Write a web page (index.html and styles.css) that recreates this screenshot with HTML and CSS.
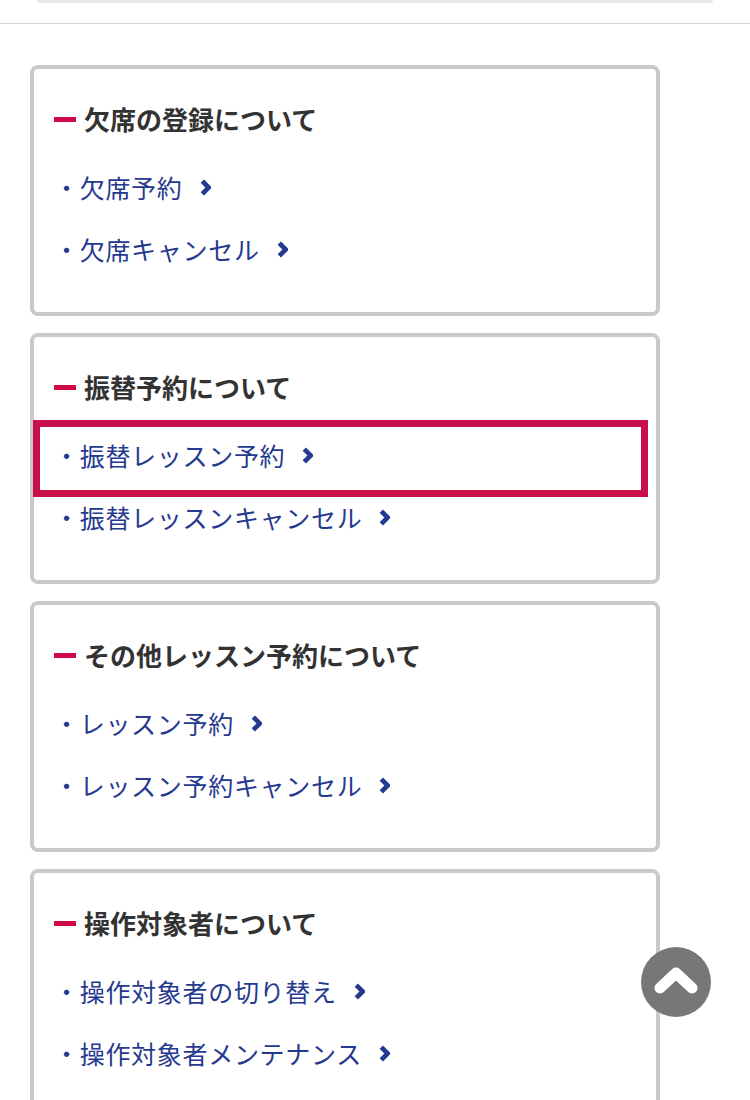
FILE: index.html
```html
<!DOCTYPE html>
<html lang="ja">
<head>
    <title>ヘルプ</title>
    <meta charset="utf-8">
    <link rel="stylesheet" href="styles.css">
</head>
<body>
    <div class="top">
        <div class="search"></div>
    </div>
    <div class="wrapper">
        <div class="card">
            <h2 class="card-title">欠席の登録について</h2>
            <ul class="links">
                <li class="link-item"><a href="#">・欠席予約<svg class="chev" viewBox="0 0 10 16"><polyline points="2,2 8,8 2,14"/></svg></a></li>
                <li class="link-item"><a href="#">・欠席キャンセル<svg class="chev" viewBox="0 0 10 16"><polyline points="2,2 8,8 2,14"/></svg></a></li>
            </ul>
        </div>
        <div class="card">
            <h2 class="card-title">振替予約について</h2>
            <ul class="links">
                <li class="link-item marked"><a href="#">・振替レッスン予約<svg class="chev" viewBox="0 0 10 16"><polyline points="2,2 8,8 2,14"/></svg></a></li>
                <li class="link-item"><a href="#">・振替レッスンキャンセル<svg class="chev" viewBox="0 0 10 16"><polyline points="2,2 8,8 2,14"/></svg></a></li>
            </ul>
        </div>
        <div class="card">
            <h2 class="card-title">その他レッスン予約について</h2>
            <ul class="links">
                <li class="link-item"><a href="#">・レッスン予約<svg class="chev" viewBox="0 0 10 16"><polyline points="2,2 8,8 2,14"/></svg></a></li>
                <li class="link-item"><a href="#">・レッスン予約キャンセル<svg class="chev" viewBox="0 0 10 16"><polyline points="2,2 8,8 2,14"/></svg></a></li>
            </ul>
        </div>
        <div class="card">
            <h2 class="card-title">操作対象者について</h2>
            <ul class="links">
                <li class="link-item"><a href="#">・操作対象者の切り替え<svg class="chev" viewBox="0 0 10 16"><polyline points="2,2 8,8 2,14"/></svg></a></li>
                <li class="link-item"><a href="#">・操作対象者メンテナンス<svg class="chev" viewBox="0 0 10 16"><polyline points="2,2 8,8 2,14"/></svg></a></li>
            </ul>
        </div>
    </div>
    <a href="#" class="to-top">
        <svg viewBox="0 0 46 30"><polyline points="7,23 23,8 39,23"/></svg>
    </a>
</body>
</html>
```

FILE: styles.css
```css
*{
    padding: 0;
    margin: 0;
    box-sizing: border-box;
    font-family: "Noto Sans CJK JP", "Noto Sans", sans-serif;
}
body{
    background: #ffffff;
}
.top{
    height: 24px;
    border-bottom: 1px solid #d4d4d4;
}
.search{
    margin: 0 37px;
    height: 3px;
    background-color: #e8e9ef;
    border-radius: 0 0 10px 10px;
}
.wrapper{
    padding: 41px 0 40px 30px;
    display: flex;
    flex-direction: column;
    gap: 17px;
}
.card{
    width: 630px;
    border: 4px solid #c9c9c9;
    border-radius: 8px;
    padding: 32px 20px 32px 20px;
}
.card-title{
    font-size: 26px;
    line-height: 36px;
    font-weight: 700;
    color: #333333;
    display: flex;
    align-items: center;
}
.card-title::before{
    content: "";
    width: 22px;
    height: 5px;
    background-color: #cf0a45;
    margin-right: 8px;
    flex-shrink: 0;
}
.links{
    list-style: none;
    margin-top: 19px;
}
.link-item{
    position: relative;
    height: 62px;
    display: flex;
    align-items: center;
}
.link-item a{
    color: #25398f;
    text-decoration: none;
    font-size: 25px;
    line-height: 36px;
    letter-spacing: 0.7px;
    display: flex;
    align-items: center;
}
.chev{
    width: 11px;
    height: 17px;
    margin-left: 17px;
    fill: none;
    stroke: #25398f;
    stroke-width: 4.4;
}
.marked::after{
    content: "";
    position: absolute;
    top: -4px;
    bottom: -11px;
    left: -21px;
    right: -12px;
    border: 7px solid #c8104a;
    pointer-events: none;
}
.to-top{
    position: fixed;
    right: 39px;
    bottom: 83px;
    width: 70px;
    height: 70px;
    border-radius: 50%;
    background-color: #777777;
    display: flex;
    align-items: center;
    justify-content: center;
}
.to-top svg{
    width: 46px;
    height: 30px;
    margin-top: -4px;
    fill: none;
    stroke: #ffffff;
    stroke-width: 11;
    stroke-linecap: round;
    stroke-linejoin: round;
}
```
